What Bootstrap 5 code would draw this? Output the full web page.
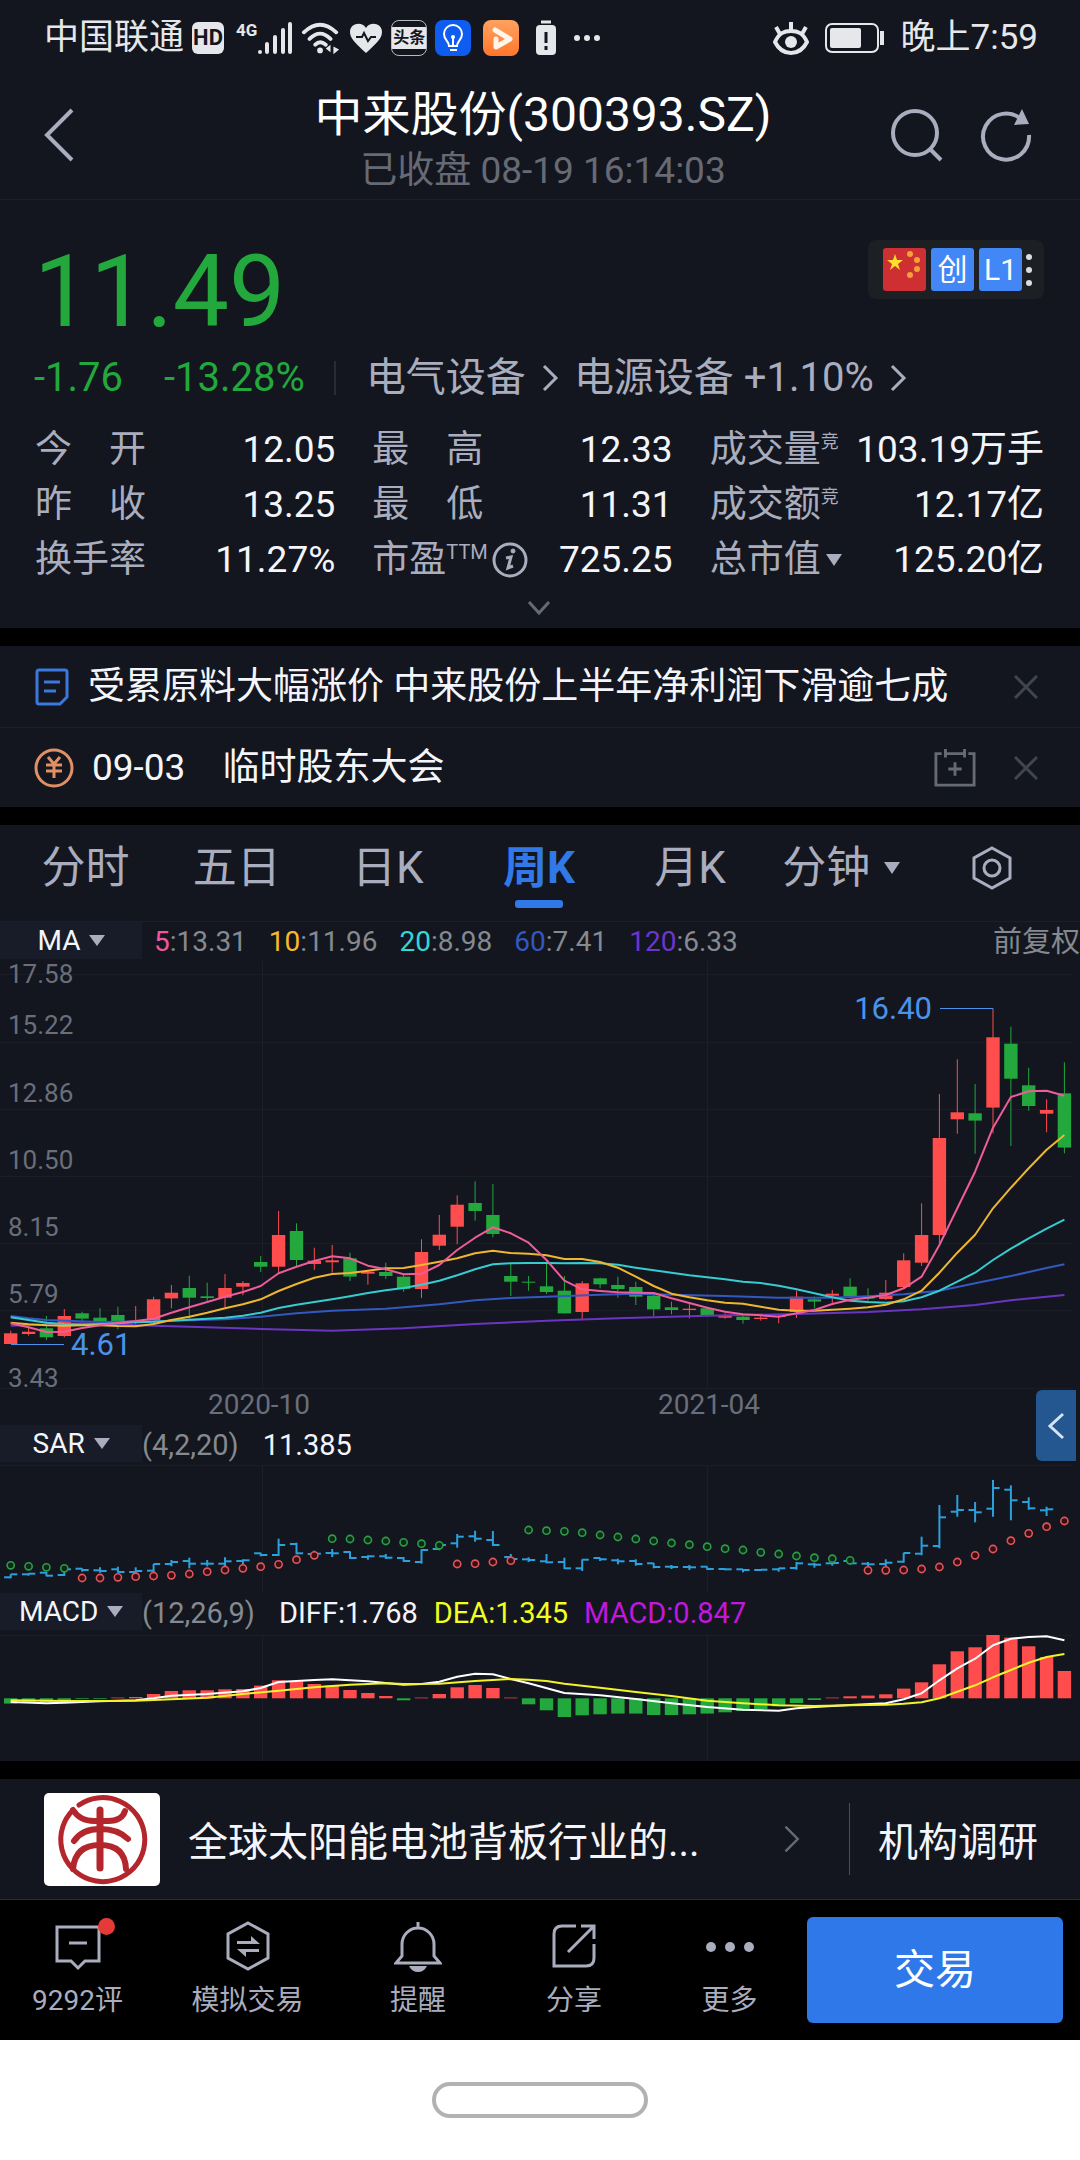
<!DOCTYPE html>
<html lang="zh-CN" data-bs-theme="dark">
<head>
<meta charset="utf-8">
<meta name="viewport" content="width=device-width, initial-scale=1">
<title>中来股份(300393.SZ)</title>
<link href="https://cdn.jsdelivr.net/npm/bootstrap@5.3.0/dist/css/bootstrap.min.css" rel="stylesheet">
<style>
  :root { --ink:#13161e; --soft:#a9adbd; --dim:#666a75; --bright:#f4f5fa; --up:#ff4c4c; --down:#22a83c; --blue:#3178e8; --rule:#1c1f27; }
  body { background:var(--ink); color:var(--bright); font-family:Roboto,"Noto Sans CJK SC",sans-serif; font-size:37px; line-height:50px; font-weight:400; overflow-x:hidden; }
  a { color:inherit; text-decoration:none; }
  button, select { background:none; border:0; padding:0; color:inherit; font:inherit; line-height:inherit; }
  select { appearance:none; }
  select option { color:#000; }
  svg { display:block; flex:none; }
  .stroke { fill:none; stroke:currentColor; stroke-width:3; }
  .soft { color:var(--soft); }
  .dim { color:var(--dim); }
  .fall { color:var(--down); }

  .status { height:76px; padding:0 42px 0 44px; font-size:35px; color:#e6e7ea; }
  .status-icons { gap:8px; }
  .hd { background:#e6e7ea; color:var(--ink); border-radius:6px; width:32px; height:32px; line-height:32px; font-size:22px; font-weight:700; text-align:center; }
  .net { font-size:17px; line-height:18px; height:34px; font-weight:700; }
  .toutiao { width:36px; height:36px; border:1px solid #b9babd; border-radius:8px; overflow:hidden; }
  .toutiao span { display:block; margin-top:6px; height:22px; line-height:22px; background:#e6e7ea; color:var(--ink); font-size:16px; font-weight:700; text-align:center; }

  .topbar { height:124px; padding:0 48px 0 44px; border-bottom:1px solid var(--rule); color:var(--soft); }
  .topbar .title { padding:10px 0 0 10px; }
  .topbar h1 { font-size:48px; line-height:58px; font-weight:400; margin:0; color:#fff; }
  .topbar p { font-size:37px; line-height:54px; margin:0; }
  .side { width:150px; }
  .tools { gap:34px; }

  .quote { padding:40px 36px 0 34px; }
  .price { font-size:100px; line-height:104px; }
  .badges { height:59px; padding:0 10px 0 15px; gap:5px; background:#1c1f24; border-radius:8px; }
  .dots { margin-left:-3px; }
  .tag { width:43px; height:43px; line-height:43px; border-radius:3px; background:#4287f5; color:#fff; font-size:30px; text-align:center; }
  .change { margin-top:9px; font-size:40px; }
  .pct { margin-left:41px; }
  .bar { width:2px; height:34px; background:#282c35; margin:0 30px 0 29px; }
  .arrow { margin:0 15px; }
  .stats { display:grid; grid-template-columns:300fr 300fr 334fr; column-gap:37px; margin:19px 0 0 1px; line-height:55px; }
  .stats > div { display:flex; justify-content:space-between; }
  .stats dt { font-weight:400; color:var(--soft); display:flex; align-items:center; }
  .stats dd { margin:0; }
  .note { font-size:18px; line-height:18px; align-self:flex-start; margin-top:11px; }
  .note-latin { font-size:20px; }
  .more { height:41px; display:flex; align-items:center; justify-content:center; width:100%; }

  .gutter { height:18px; background:#000; }
  .news { height:81px; padding:0 42px 0 34px; }
  .news + .news { border-top:1px solid var(--rule); height:80px; }
  .news a { margin-left:18px; }
  .news .x { color:#41454e; }
  .cal { margin-right:38px; }

  .periods { padding:0 12px 0 10px; height:97px; font-size:44px; color:var(--soft); border-bottom:1px solid var(--rule); }
  .periods > * { flex:1 1 0; height:86px; display:flex; align-items:center; justify-content:center; position:relative; gap:14px; }
  .periods .on { color:var(--blue); font-weight:700; }
  .periods .on::after { content:""; position:absolute; bottom:3px; width:48px; height:8px; border-radius:3px; background:var(--blue); }

  .ind { height:39px; font-size:29px; line-height:40px; }
  .pick { width:142px; height:37px; gap:8px; font-size:28px; background:#181c28; display:flex; align-items:center; justify-content:center; flex:none; }
  .ind .vals { color:#858990; }
  .averages { font-size:28px; gap:22px; }
  .adjust { font-size:29px; }
  .readings { gap:16px; }
  .chart { width:100%; height:auto; font-size:26px; overflow:visible; }
  .chart text { fill:#6a6e7b; }
  .chart .mark-label { fill:#4a92ea; font-size:31px; }
  .chart .date { font-size:28px; }
  .chartbox { position:relative; }
  .drawer { position:absolute; right:4px; bottom:300px; width:40px; height:71px; border-radius:6px 0 0 6px; background:#24578f; color:#d5e2f5; display:flex; align-items:center; justify-content:center; }

  .promo { height:121px; padding:0 42px 0 44px; font-size:40px; border-bottom:1px solid #2a2c32; }
  .promo .logo { background:#fff; border-radius:5px; }
  .split { width:1px; height:72px; background:#4a4d55; }

  .dock { background:#000; color:var(--soft); display:grid; grid-template-columns:155fr 185fr 156fr 156fr 155fr 273fr; height:140px; font-size:28px; line-height:36px; }
  .dock a { display:flex; flex-direction:column; align-items:center; padding-top:20px; gap:11px; position:relative; }
  .dot { position:absolute; left:98px; top:18px; width:17px; height:17px; border-radius:50%; background:#e53a35; }
  .trade { background:#2f78ea; color:#fff; border-radius:6px; margin:17px 17px 17px 0; font-size:41px; }
  .home { background:#fff; height:120px; }
  .pill { width:216px; height:36px; border:4px solid #b2b2b2; border-radius:18px; }
</style>
</head>
<body>

<div class="status d-flex justify-content-between align-items-center">
  <div class="status-icons d-flex align-items-center">
    <span>中国联通</span>
    <span class="hd">HD</span>
    <span class="d-flex align-items-end">
      <span class="net ms-1">4G</span>
      <svg width="36" height="34" viewBox="0 0 36 34" stroke="#e6e7ea" stroke-width="4" stroke-linecap="round"><path d="M3 31v0M10 31V23M18 31V16M26 31V9M33 31V3"/></svg>
    </span>
    <svg width="40" height="36" viewBox="0 0 42 36" fill="none" stroke="#e6e7ea" stroke-width="4" stroke-linecap="round"><path d="M3 12Q20-4 37 12M9 19Q20 8 31 19M15 25Q20 20 26 25"/><circle cx="20" cy="31" r="3" fill="#e6e7ea" stroke="none"/><path d="M31 25v8l-5-4zM34 27v8l6-5z" fill="#e6e7ea" stroke="none"/></svg>
    <svg width="34" height="31" viewBox="0 0 34 31"><path d="M17 30C6 20 1 15 1 9 1 0 13-2 17 5 21-2 33 0 33 9c0 6-5 11-16 21z" fill="#e6e7ea"/><path d="M7 14h6l2-4 4 8 3-4h5" fill="none" stroke="#14171f" stroke-width="2"/></svg>
    <span class="toutiao"><span>头条</span></span>
    <svg width="36" height="36" viewBox="0 0 36 36"><rect width="36" height="36" rx="8" fill="#0f5cf0"/><g fill="none" stroke="#fff" stroke-width="2"><path d="M14 26c0-5-5-6-5-12a9 9 0 0 1 18 0c0 6-5 7-5 12zM15 30h7M18 26v-8"/></g><circle cx="18" cy="17" r="2" fill="#fff"/></svg>
    <svg class="ms-1" width="36" height="36" viewBox="0 0 36 36"><defs><linearGradient id="orange" x2="0" y2="1"><stop stop-color="#ffa261"/><stop offset="1" stop-color="#ff762c"/></linearGradient></defs><rect width="36" height="36" rx="8" fill="url(#orange)"/><path d="M12 10l15 9-14 8V19" fill="none" stroke="#fff5ea" stroke-width="5" stroke-linejoin="round" stroke-linecap="round"/></svg>
    <svg class="ms-2" width="22" height="36" viewBox="0 0 22 36"><path d="M6 2h10" stroke="#e6e7ea" stroke-width="3"/><rect x="1" y="5" width="20" height="30" rx="4" fill="#e6e7ea"/><path d="M11 12v11M11 26v4" stroke="#14171f" stroke-width="3"/></svg>
    <svg class="ms-2" width="28" height="8" viewBox="0 0 28 8" fill="#e6e7ea"><circle cx="4" cy="4" r="3"/><circle cx="14" cy="4" r="3"/><circle cx="24" cy="4" r="3"/></svg>
  </div>
  <div class="d-flex align-items-center">
    <svg width="36" height="34" viewBox="0 0 36 34" fill="none" stroke="#e6e7ea" stroke-width="4"><path d="M2 21c4-9 9-11 16-11s12 2 16 11c-4 8-9 11-16 11S6 29 2 21zM18 10V1M7 13L3 6M29 13l4-7"/><circle cx="18" cy="21" r="6" fill="#e6e7ea" stroke="none"/></svg>
    <svg class="mx-3" width="60" height="30" viewBox="0 0 60 30"><rect x="1" y="1" width="52" height="28" rx="6" fill="none" stroke="#e6e7ea" stroke-width="2"/><rect x="5" y="5" width="31" height="20" rx="2" fill="#e6e7ea"/><path d="M57 8v14" stroke="#e6e7ea" stroke-width="4"/></svg>
    <span>晚上7:59</span>
  </div>
</div>

<header class="topbar d-flex justify-content-between">
  <a class="side pt-4" href="#" aria-label="返回"><svg class="stroke mt-2" width="32" height="54" viewBox="0 0 32 54"><path d="M28 2L3 27l25 25" stroke-width="4"/></svg></a>
  <div class="title text-center"><h1>中来股份(300393.SZ)</h1><p class="dim">已收盘 08-19 16:14:03</p></div>
  <div class="side tools d-flex justify-content-end pt-4">
    <button type="button" class="align-self-start mt-2" aria-label="搜索"><svg class="stroke" width="58" height="54" viewBox="0 0 58 54"><circle cx="27" cy="25" r="22" stroke-width="4"/><path d="M42 41l11 11" stroke-width="4"/></svg></button>
    <button type="button" class="align-self-start mt-2" aria-label="刷新"><svg class="stroke" width="52" height="54" viewBox="0 0 52 54"><path d="M42 12A23 23 0 1 0 49 27" stroke-width="4"/><path d="M42 1l7 15-15 1z" fill="currentColor" stroke="none"/></svg></button>
  </div>
</header>

<main>
<section class="quote">
  <div class="d-flex justify-content-between align-items-start">
    <div class="price fall">11.49</div>
    <div class="badges d-flex align-items-center">
      <svg width="43" height="43" viewBox="0 0 43 43"><rect width="43" height="43" rx="3" fill="#ce2f33"/><path d="M12 6l2 6h6l-5 4 2 6-5-4-5 4 2-6-5-4h6z" fill="#ffdf2e"/><g fill="#f5a03a"><circle cx="27" cy="6" r="3"/><circle cx="34" cy="12" r="3"/><circle cx="34" cy="21" r="3"/><circle cx="27" cy="27" r="3"/></g></svg>
      <span class="tag">创</span><span class="tag">L1</span>
      <svg class="dots" width="10" height="34" viewBox="0 0 10 34" fill="#ddd"><circle cx="5" cy="4" r="3"/><circle cx="5" cy="17" r="3"/><circle cx="5" cy="30" r="3"/></svg>
    </div>
  </div>
  <div class="change d-flex align-items-center">
    <span class="fall">-1.76</span><span class="fall pct">-13.28%</span>
    <span class="bar"></span>
    <a class="soft d-flex align-items-center" href="#">电气设备<svg class="stroke arrow" width="18" height="28" viewBox="0 0 18 28"><path d="M3 2l12 12L3 26"/></svg></a>
    <a class="soft d-flex align-items-center" href="#">电源设备 +1.10%<svg class="stroke arrow" width="18" height="28" viewBox="0 0 18 28"><path d="M3 2l12 12L3 26"/></svg></a>
  </div>
  <dl class="stats mb-0">
    <div><dt>今　开</dt><dd>12.05</dd></div>
    <div><dt>最　高</dt><dd>12.33</dd></div>
    <div><dt>成交量<span class="note">竞</span></dt><dd>103.19万手</dd></div>
    <div><dt>昨　收</dt><dd>13.25</dd></div>
    <div><dt>最　低</dt><dd>11.31</dd></div>
    <div><dt>成交额<span class="note">竞</span></dt><dd>12.17亿</dd></div>
    <div><dt>换手率</dt><dd>11.27%</dd></div>
    <div><dt>市盈<span class="note note-latin">TTM</span><svg class="ms-1" width="36" height="36" viewBox="0 0 36 36" fill="none" stroke="currentColor"><circle cx="18" cy="18" r="16" stroke-width="3"/><path d="M14 16l5-1-3 11 5-2" stroke-width="3"/><circle cx="21" cy="9" r="2" fill="currentColor"/></svg></dt><dd>725.25</dd></div>
    <div><dt>总市值<svg class="ms-1" width="18" height="14" viewBox="0 0 18 14"><path d="M1 1h16l-8 12z" fill="currentColor"/></svg></dt><dd>125.20亿</dd></div>
  </dl>
  <button type="button" class="more dim" aria-label="展开"><svg class="stroke" width="24" height="16" viewBox="0 0 24 16"><path d="M2 2l10 11L22 2"/></svg></button>
</section>

<div class="gutter"></div>

<section>
  <div class="news d-flex align-items-center">
    <svg width="36" height="38" viewBox="0 0 36 38" fill="none" stroke="#3b78de" stroke-width="3"><path d="M5 2h26q2 0 2 2v25l-7 7H5q-2 0-2-2V4q0-2 2-2zM10 14h16M10 23h12"/></svg>
    <a class="text-truncate" href="#">受累原料大幅涨价 中来股份上半年净利润下滑逾七成</a>
    <button type="button" class="x ms-auto" aria-label="关闭"><svg class="stroke" width="24" height="24" viewBox="0 0 24 24"><path d="M1 1l22 22M23 1L1 23"/></svg></button>
  </div>
  <div class="news d-flex align-items-center">
    <svg width="40" height="40" viewBox="0 0 40 40" fill="none" stroke="#e08f66" stroke-width="3"><circle cx="20" cy="20" r="18"/><path d="M14 9l6 7 6-7M12 17h16M12 23h16M20 16v14"/></svg>
    <a href="#">09-03　临时股东大会</a>
    <button type="button" class="dim ms-auto cal" aria-label="加入日历"><svg class="stroke" width="42" height="42" viewBox="0 0 44 42"><path d="M8 6H2v33h40V6h-6M12 1v9M32 1v9M12 6h20M22 15v14M15 22h14"/></svg></button>
    <button type="button" class="x" aria-label="关闭"><svg class="stroke" width="24" height="24" viewBox="0 0 24 24"><path d="M1 1l22 22M23 1L1 23"/></svg></button>
  </div>
</section>

<div class="gutter"></div>

<nav class="periods d-flex" aria-label="周期">
  <button type="button">分时</button>
  <button type="button">五日</button>
  <button type="button">日K</button>
  <button type="button" class="on" aria-current="true">周K</button>
  <button type="button">月K</button>
  <span><select aria-label="分钟周期"><option>分钟</option></select><svg width="16" height="14" viewBox="0 0 16 14"><path d="M0 1h16l-8 12z" fill="currentColor"/></svg></span>
  <button type="button" aria-label="设置"><svg class="stroke" width="42" height="44" viewBox="0 0 42 44"><path d="M21 2l18 10v20L21 42 3 32V12z"/><circle cx="21" cy="22" r="8"/></svg></button>
</nav>

<section class="chartbox">
  <div class="ind d-flex">
    <span class="pick"><select aria-label="主图指标"><option>MA</option></select><svg class="soft" width="16" height="12" viewBox="0 0 16 12"><path d="M0 0h16l-8 11z" fill="currentColor"/></svg></span>
    <div class="vals averages d-flex flex-grow-1 ms-2 ps-1">
      <span><span style="color:#f0569a">5</span>:13.31</span><span><span style="color:#f7b82d">10</span>:11.96</span><span><span style="color:#33d6d8">20</span>:8.98</span><span><span style="color:#3557c0">60</span>:7.41</span><span><span style="color:#6d35cc">120</span>:6.33</span>
      <span class="adjust ms-auto">前复权</span>
    </div>
  </div>
  <svg class="chart" id="kline" viewBox="0 961 1080 464" role="img" aria-label="周K线"></svg>
  <div class="ind d-flex">
    <span class="pick"><select aria-label="副图一指标"><option>SAR</option></select><svg class="soft" width="16" height="12" viewBox="0 0 16 12"><path d="M0 0h16l-8 11z" fill="currentColor"/></svg></span>
    <div class="d-flex gap-4"><span class="vals">(4,2,20)</span><span>11.385</span></div>
  </div>
  <svg class="chart" id="sar" viewBox="0 1464 1080 129" role="img" aria-label="SAR"></svg>
  <div class="ind d-flex">
    <span class="pick"><select aria-label="副图二指标"><option>MACD</option></select><svg class="soft" width="16" height="12" viewBox="0 0 16 12"><path d="M0 0h16l-8 11z" fill="currentColor"/></svg></span>
    <div class="d-flex gap-4"><span class="vals">(12,26,9)</span><span class="readings d-flex"><span>DIFF:1.768</span><span style="color:#f1ff1f">DEA:1.345</span><span style="color:#c217dd">MACD:0.847</span></span></div>
  </div>
  <svg class="chart" id="macd" viewBox="0 1632 1080 129" role="img" aria-label="MACD"></svg>
  <button type="button" class="drawer" aria-label="展开侧栏"><svg class="stroke" width="18" height="28" viewBox="0 0 18 28"><path d="M16 2L3 14l13 12"/></svg></button>
</section>

<div class="gutter"></div>

<section class="promo d-flex align-items-center">
  <svg class="logo" width="116" height="93" viewBox="0 0 116 93" fill="none" stroke="#b3262b" stroke-width="5" stroke-linecap="round"><path d="M35 12A42 42 0 1 1 29 17"/><g stroke-width="6"><path d="M56 17v58" stroke-width="7"/><path d="M29 17q7 11 21 11h14q14 0 17-10M30 48q8-12 26-12 18 0 28 10M29 76q2-24 27-24t26 24"/></g></svg>
  <a class="d-flex align-items-center flex-grow-1" href="#"><span class="ms-4 ps-1 pt-2">全球太阳能电池背板行业的...</span><svg class="stroke ms-auto dim" width="18" height="32" viewBox="0 0 22 34"><path d="M3 2l15 15L3 32"/></svg></a>
  <span class="split ms-5 me-4"></span>
  <a class="ps-1 pt-2" href="#">机构调研</a>
</section>

<nav class="dock">
  <a href="#"><svg class="stroke" width="48" height="52" viewBox="0 0 48 52"><path d="M3 7h42v34H31l-7 7-7-7H3zM15 23h18"/></svg>9292评<span class="dot"></span></a>
  <a href="#"><svg class="stroke" width="48" height="52" viewBox="0 0 48 52"><path d="M24 3l20 11v24L24 49 4 38V14z"/><path d="M13 24V21h14v-5l9 8zM35 29v3H22v5l-9-8z" fill="currentColor" stroke="none"/></svg>模拟交易</a>
  <a href="#"><svg class="stroke" width="48" height="52" viewBox="0 0 48 52"><path d="M24 2v5M8 36V24a16 16 0 0 1 32 0v12l6 7H2z"/><path d="M15 46h18q-3 6-9 6t-9-6z" fill="currentColor" stroke="none"/></svg>提醒</a>
  <a href="#"><svg class="stroke" width="48" height="52" viewBox="0 0 48 52"><path d="M26 6H12Q4 6 4 14v32h32q8 0 8-8V24M18 32L43 7M31 6h13v13"/></svg>分享</a>
  <a href="#"><svg width="50" height="52" viewBox="0 0 50 52" fill="currentColor"><circle cx="6" cy="27" r="5"/><circle cx="25" cy="27" r="5"/><circle cx="44" cy="27" r="5"/></svg>更多</a>
  <button type="button" class="trade">交易</button>
</nav>
</main>

<footer class="home d-flex align-items-center justify-content-center"><div class="pill"></div></footer>

<script>
const STEP = 17.86, X0 = 10.7;
const xs = i => X0 + STEP * i;
const RED = '#ff4c4c', GREEN = '#22a83c';
const price = v => 960 + v / 3, sub = v => 1380 + v / 3;
const f = n => n.toFixed(1);
const line = (pts, map, color, w = 2) =>
  `<polyline fill="none" stroke="${color}" stroke-width="${w}" stroke-linejoin="round" points="${pts.map(([i, v]) => f(xs(i)) + ',' + f(map(v))).join(' ')}"/>`;
const seg = (x1, y1, x2, y2, c, w = 1) => `<line x1="${f(x1)}" y1="${f(y1)}" x2="${f(x2)}" y2="${f(y2)}" stroke="${c}" stroke-width="${w}"/>`;
const grid = (ys, top, bottom) => ys.map(y => seg(0, y + .5, 1073, y + .5, '#1a1d25')).join('') + [262, 707].map(x => seg(x + .5, top, x + .5, bottom, '#1c1f27')).join('');

// colour, high, body top, body bottom, low
const candles = `r1112,1120,1152,1152 r1098,1115,1122,1127 g1068,1105,1132,1140 r1047,1068,1128,1132 g1055,1060,1076,1085 g1045,1073,1084,1088 g1040,1065,1088,1108 r1038,1084,1088,1092 r1010,1018,1082,1098 r975,998,1015,1045
g947,984,1013,1080 g968,1009,1014,1022 r942,984,1013,1042 r963,969,980,1006 g888,906,920,936 r753,825,920,940 g790,813,900,918 r863,902,912,930 r855,901,907,938 g878,895,950,963
r930,935,941,974 g908,936,948,957 g942,950,987,995 r838,876,987,1014 r765,824,857,870 r706,734,800,853 g664,729,753,782 g672,765,822,832 g912,948,965,1008 g948,965,968,992
g905,979,996,1002 g948,992,1060,1060 r963,970,1056,1077 g953,955,973,985 g950,975,987,1013 g965,981,1010,1035 g1000,1007,1048,1068 g1025,1042,1050,1063 r1027,1046,1050,1075 g1040,1045,1067,1070
r1060,1068,1073,1076 g1065,1070,1080,1091 r1065,1073,1077,1082 r1062,1068,1071,1090 r992,1010,1056,1074 g1010,1018,1025,1045 r990,1001,1007,1030 g955,980,1008,1010 g985,1012,1016,1022 r960,998,1017,1020
r880,901,981,985 r730,825,908,918 r402,534,825,850 r298,457,478,521 g372,460,482,581 r145,232,443,520 g200,251,356,558 g323,376,438,452 r418,450,461,517 g307,400,563,580`.split(/\s+/);
const full = s => s.split(',').map((v, i) => [i, +v]);
const ma5 = full('1090,1102,1116,1115,1104,1096,1088,1083,1076,1058,1042,1026,1010,996,978,940,920,903,889,895,917,928,943,941,915,870,833,802,820,848,900,962,988,993,997,998,999,1015,1029,1043,1055,1063,1066,1070,1060,1050,1032,1019,1013,1005,985,950,855,745,635,503,411,394,392,407');
const ma10 = full('1088,1093,1096,1097,1096,1096,1098,1099,1092,1080,1070,1058,1045,1033,1018,993,972,953,942,939,932,925,924,915,905,895,880,872,879,881,886,897,897,906,923,950,978,1001,1012,1021,1028,1031,1040,1049,1052,1052,1049,1046,1042,1034,1018,992,938,878,824,745,683,625,569,525');
const ma20 = full('1072,1080,1088,1092,1094,1092,1090,1087,1085,1082,1079,1076,1073,1067,1058,1044,1034,1026,1018,1009,999,991,984,974,962,946,928,913,910,909,909,910,909,910,914,923,931,938,946,952,958,965,969,977,988,1000,1012,1022,1026,1028,1024,1012,992,965,938,900,866,835,806,779');
const ma60 = [[0,1068],[1,1075],[2,1080],[5,1086],[8,1084],[12,1078],[14,1070],[16,1060],[18,1052],[21,1046],[24,1033],[26,1021],[28,1014],[30,1010],[33,1004],[35,1001],[37,1004],[40,1008],[43,1013],[46,1013],[48,1009],[50,1003],[52,992],[54,970],[56,948],[58,924],[59,913]];
const ma120 = [[0,1097],[4,1090],[8,1097],[10,1100],[14,1107],[18,1112],[22,1105],[26,1092],[30,1082],[34,1075],[39,1067],[44,1062],[48,1056],[51,1048],[54,1035],[56,1021],[59,1005]];

let k = grid([974, 1042, 1109, 1176, 1243, 1310, 1388], 961, 1388);
candles.forEach((c, i) => {
  const color = c[0] === 'r' ? RED : GREEN, [h, a, b, l] = c.slice(1).split(',').map(v => price(+v)), x = xs(i);
  k += seg(x, h, x, l, color) + `<rect x="${f(x - 6.7)}" y="${f(a)}" width="13.4" height="${f(Math.max(b - a, 1))}" fill="${color}"/>`;
});
k += line(ma120, price, '#6b35c4') + line(ma60, price, '#3358c0') + line(ma20, price, '#35cdd0') + line(ma10, price, '#efb630') + line(ma5, price, '#ee5c9a');
[['17.58',983],['15.22',1034],['12.86',1102],['10.50',1169],['8.15',1236],['5.79',1303],['3.43',1387]].forEach(([t, y]) => k += `<text x="8" y="${y}">${t}</text>`);
k += seg(11, 1344.5, 64, 1344.5, '#4a92ea', 1) + '<text class="mark-label" x="71" y="1355">4.61</text>';
k += seg(940, 1008.5, 993, 1008.5, '#4a92ea', 1) + '<text class="mark-label" x="932" y="1019" text-anchor="end">16.40</text>';
k += '<text class="date" x="259" y="1414" text-anchor="middle">2020-10</text><text class="date" x="709" y="1414" text-anchor="middle">2021-04</text>';
document.getElementById('kline').innerHTML = k;

// open tick, high, low, close tick
const early = '592,583,592,583 583,580,584,581 578,576,586,587 585,555,585,568 566,565,572,570 571,562,575,573 568,560,575,576 576,562,578,573 572,552,575,552 552,540,556,546 543,533,562,551 551,540,556,551 551,532,556,544 543,538,550,541 520,518,526,525 525,476,525,495 492,488,520,520 522,512,528,521 519,507,528,520 516,514,534,534 531,526,536,529 529,522,534,533 534,531,543,543 546,508,548,510 507,488,508,495 490,462,500,470 469,452,482,476 480,453,495,495 531,522,545,537 538,532,543,540'.split(' ').map(s => s.split(',').map(Number));
const late = '394,372,397,397 396,383,414,415 415,388,420,389 384,383,390,388 391,386,400,394 393,388,404,402 400,399,412,411 410,405,414,411 411,405,417,412 410,410,417,417 417,416,418,418 418,417,424,420 420,418,420,419 418,414,422,415 414,396,416,400 403,398,410,404 400,396,404,399 393,382,400,400 401,396,406,403 402,388,406,398 395,368,395,369 371,320,373,347 348,225,352,262 245,195,257,240 240,216,274,247 236,150,257,174 179,166,268,211 216,202,236,235 241,230,255,238'.split(' ').map(s => s.split(',').map(v => +v + 150));
const sarDots = [556,559,562,565,594,594,592,590,588,586,582,575,570,565,560,553,539,526,476,477,480,483,487,491,496,552,551,546,542,450]
  .concat([302,304,308,315,321,327,333,339,344,350,356,360,367,372,378,383,386,391,421,421,420,417,411,396,376,357,332,310,290,273].map(v => v + 150));
const above = i => i < 4 || (i > 17 && i < 25) || (i > 28 && i < 48);
let s = grid([1465], 1465, 1592);
early.concat(late).forEach(([o, h, l, c], i) => {
  const x = xs(i);
  s += seg(x - 6.6, sub(o), x, sub(o), '#2aa0dc', 2) + seg(x, sub(h), x, sub(l) + 1, '#2aa0dc', 2) + seg(x, sub(c), x + 6.6, sub(c), '#2aa0dc', 2);
});
sarDots.forEach((v, i) => s += `<circle cx="${f(xs(i))}" cy="${f(sub(v))}" r="3.6" fill="${above(i) ? '#0d2a18' : '#3a0d10'}" stroke="${above(i) ? '#2c9c46' : '#e0555c'}" stroke-width="1.6"/>`);
document.getElementById('sar').innerHTML = s;

const bars = [-16,-12,-12,-8,-2,-1,1,4,13,22,24,24,27,28,38,54,50,43,38,25,16,7,-6,1,13,33,40,31,1,-18,-36,-56,-51,-48,-46,-46,-50,-50,-48,-46,-42,-38,-32,-24,-14,-5,2,6,8,12,29,48,102,141,153,190,182,156,124,82];
const diff = [[0,966],[2,970],[3,968],[5,964],[7,961],[8,955],[9,947],[11,942],[13,934],[14,924],[15,906],[17,900],[18,898],[20,904],[22,914],[23,912],[24,905],[25,890],[26,881],[27,883],[28,897],[29,910],[31,939],[33,946],[35,957],[37,970],[39,981],[41,989],[43,992],[44,985],[45,981],[47,975],[49,970],[50,958],[51,940],[52,901],[53,865],[54,836],[55,796],[56,776],[57,771],[58,769],[59,781]];
const dea = [[0,961],[3,963],[7,962],[9,958],[11,953],[13,942],[15,932],[17,922],[19,914],[21,910],[22,912],[24,911],[26,903],[28,897],[29,899],[30,903],[31,911],[33,923],[35,936],[37,948],[39,962],[41,970],[43,976],[45,978],[47,976],[49,974],[50,971],[51,967],[52,955],[53,935],[54,916],[55,892],[56,870],[57,848],[58,831],[59,822]];
let m = grid([1635], 1635, 1761);
bars.forEach((v, i) => {
  const h = Math.max(Math.abs(v) / 3, .7);
  m += `<rect x="${f(xs(i) - 6.7)}" y="${f(v > 0 ? 1698.3 - h : 1698.3)}" width="13.4" height="${f(h)}" fill="${v > 0 ? RED : GREEN}"/>`;
});
m += line(diff, sub, '#fff') + line(dea, sub, '#f3f32a');
document.getElementById('macd').innerHTML = m;
</script>
<script src="https://cdn.jsdelivr.net/npm/bootstrap@5.3.0/dist/js/bootstrap.bundle.min.js"></script>
</body>
</html>
